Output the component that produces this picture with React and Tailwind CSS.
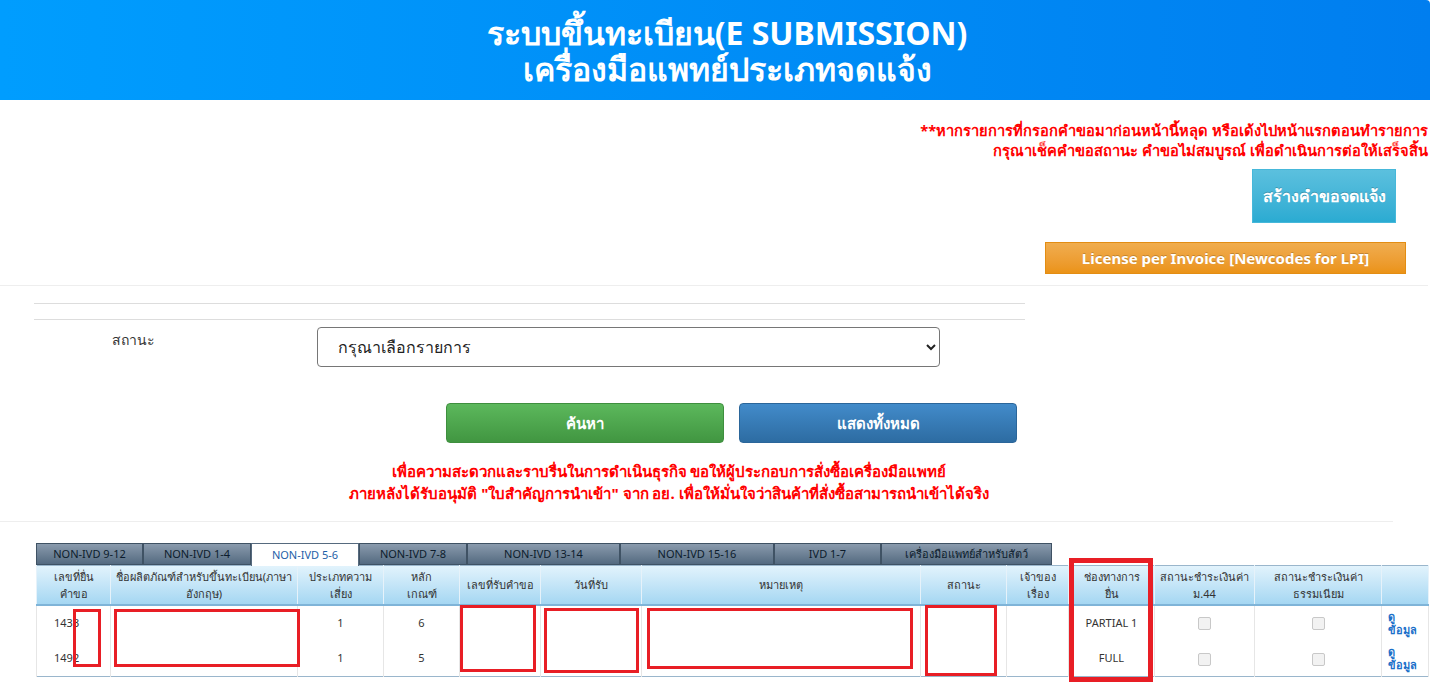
import React from 'react';

const cols = [74, 187, 86, 76, 81, 101, 279, 86, 62, 86, 100, 127, 47];

const heads = [
  ['เลขที่ยื่น', 'คำขอ'],
  ['ชื่อผลิตภัณฑ์สำหรับขึ้นทะเบียน(ภาษา', 'อังกฤษ)'],
  ['ประเภทความ', 'เสี่ยง'],
  ['หลัก', 'เกณฑ์'],
  ['เลขที่รับคำขอ'],
  ['วันที่รับ'],
  ['หมายเหตุ'],
  ['สถานะ'],
  ['เจ้าของ', 'เรื่อง'],
  ['ช่องทางการ', 'ยื่น'],
  ['สถานะชำระเงินค่า', 'ม.44'],
  ['สถานะชำระเงินค่า', 'ธรรมเนียม'],
  [],
];

const tabs = [
  ['NON-IVD 9-12', 107],
  ['NON-IVD 1-4', 108],
  ['NON-IVD 5-6', 108],
  ['NON-IVD 7-8', 108],
  ['NON-IVD 13-14', 153],
  ['NON-IVD 15-16', 154],
  ['IVD 1-7', 107],
  ['เครื่องมือแพทย์สำหรับสัตว์', 171],
];

const rows = [
  { no: '1433', risk: '1', rule: '6', ch: 'PARTIAL 1' },
  { no: '1492', risk: '1', rule: '5', ch: 'FULL' },
];

// red marker boxes drawn over the screenshot
const marks = [
  'left-[73px] top-[609px] w-[28px] h-[58px] border-[3px]',
  'left-[114px] top-[609px] w-[186px] h-[58px] border-[3px]',
  'left-[460px] top-[605px] w-[76px] h-[67px] border-[3px]',
  'left-[544px] top-[608px] w-[95px] h-[65px] border-[3px]',
  'left-[647px] top-[608px] w-[266px] h-[61px] border-[3px]',
  'left-[925px] top-[605px] w-[72px] h-[71px] border-[3px]',
  'left-[1069px] top-[558px] w-[84px] h-[124px] border-[5px]',
];

export default function App() {
  return (
    <div className="relative w-[1436px] h-[682px] overflow-hidden bg-white font-['Tahoma','Noto_Sans','DejaVu_Sans',sans-serif]">
      <div className="w-[1430px] h-[100px] pl-[24px] pt-[2px] rounded-tr-[4px] bg-gradient-to-r from-[#009dfe] to-[#007eef] flex flex-col items-center justify-center text-white font-bold text-[32px] leading-[36px]">
        <div>ระบบขึ้นทะเบียน(E SUBMISSION)</div>
        <div>เครื่องมือแพทย์ประเภทจดแจ้ง</div>
      </div>

      <div className="flex flex-col items-end pt-[20px] pr-[8px] text-[#ff0000] font-bold text-[14.7px] leading-[20px]">
        <div>**หากรายการที่กรอกคำขอมาก่อนหน้านี้หลุด หรือเด้งไปหน้าแรกตอนทำรายการ</div>
        <div>กรุณาเช็คคำขอสถานะ คำขอไม่สมบูรณ์ เพื่อดำเนินการต่อให้เสร็จสิ้น</div>
      </div>
      <div className="flex justify-end pr-[40px] mt-[9px]">
        <button className="w-[144px] h-[54px] bg-gradient-to-b from-[#5bc0de] to-[#2aabd2] border border-[#46b8da] text-white font-bold text-[16px] [text-shadow:0_-1px_0_rgba(0,0,0,0.2)]">
          สร้างคำขอจดแจ้ง
        </button>
      </div>
      <div className="flex justify-end pr-[30px] mt-[19px]">
        <button className="w-[361px] h-[32px] bg-gradient-to-b from-[#f0ad4e] to-[#eb9316] border border-[#e38d13] text-white font-bold text-[15px] [text-shadow:0_-1px_0_rgba(0,0,0,0.2)]">
          License per Invoice [Newcodes for LPI]
        </button>
      </div>
      <div className="w-[1428px] mt-[11px] border-t border-[#eeeeee]" />

      <div className="ml-[34px] w-[991px] mt-[17px] border-t border-[#dddddd]" />
      <div className="ml-[34px] w-[991px] mt-[15px] border-t border-[#dddddd]" />
      <div className="flex mt-[7px]">
        <div className="w-[317px] pl-[112px] pt-[2px] text-[14px] text-[#333333] font-medium">สถานะ</div>
        <select className="w-[623px] h-[40px] border border-[#767676] rounded-[4px] pl-[16px] pr-[6px] text-[16px] text-[#222222] bg-white">
          <option>กรุณาเลือกรายการ</option>
        </select>
      </div>
      <div className="flex gap-[15px] pl-[446px] mt-[36px]">
        <button className="w-[278px] h-[40px] rounded-[4px] bg-gradient-to-b from-[#5cb85c] to-[#419641] border border-[#3e8f3e] text-white font-bold text-[15px]">
          ค้นหา
        </button>
        <button className="w-[278px] h-[40px] rounded-[4px] bg-gradient-to-b from-[#428bca] to-[#2d6ca2] border border-[#2b669a] text-white font-bold text-[15px]">
          แสดงทั้งหมด
        </button>
      </div>
      <div className="ml-[34px] w-[1270px] mt-[17px] text-center text-[#ff0000] font-bold text-[15px] leading-[22px]">
        <div>เพื่อความสะดวกและราบรื่นในการดำเนินธุรกิจ ขอให้ผู้ประกอบการสั่งซื้อเครื่องมือแพทย์</div>
        <div>ภายหลังได้รับอนุมัติ "ใบสำคัญการนำเข้า" จาก อย. เพื่อให้มั่นใจว่าสินค้าที่สั่งซื้อสามารถนำเข้าได้จริง</div>
      </div>
      <div className="w-[1393px] mt-[17px] border-t border-[#eeeeee]" />

      <div className="ml-[36px] mt-[21px]">
        <div className="flex h-[22px]">
          {tabs.map(([t, w], i) => (
            <div
              key={t}
              style={{ width: w }}
              className={
                i === 2
                  ? 'h-[23px] bg-white border border-b-0 border-[#566a7e] text-[#1e5fa8] text-[11px] flex items-center justify-center'
                  : 'h-[22px] bg-gradient-to-b from-[#8a9bad] to-[#546a80] border border-[#3f5264] text-[#0c1c2c] text-[11px] flex items-center justify-center'
              }
            >
              {t}
            </div>
          ))}
        </div>
        <table className="table-fixed border-collapse w-[1392px] border border-[#9ab6cc] text-[11px] text-[#333333]">
          <colgroup>
            {cols.map((w, i) => (
              <col key={i} style={{ width: w }} />
            ))}
          </colgroup>
          <thead>
            <tr className="h-[39px] bg-gradient-to-b from-[#e2f3fc] to-[#a3d6f2]">
              {heads.map((h, i) => (
                <th key={i} className="font-normal leading-[17px] px-[2px] border-l border-r border-[#e6f2fa] border-b-2 border-b-[#7fb4d8] text-[#333333] whitespace-nowrap">
                  {h.map((line, j) => (
                    <div key={j}>{line}</div>
                  ))}
                </th>
              ))}
            </tr>
          </thead>
          <tbody>
            {rows.map((r) => (
              <tr key={r.no} className="h-[36px]">
                <td className="pl-[17px] border-x border-[#e6e6e6]">{r.no}</td>
                <td className="border-x border-[#e6e6e6]"></td>
                <td className="text-center border-x border-[#e6e6e6]">{r.risk}</td>
                <td className="text-center border-x border-[#e6e6e6]">{r.rule}</td>
                <td className="border-x border-[#e6e6e6]"></td>
                <td className="border-x border-[#e6e6e6]"></td>
                <td className="border-x border-[#e6e6e6]"></td>
                <td className="border-x border-[#e6e6e6]"></td>
                <td className="border-x border-[#e6e6e6]"></td>
                <td className="text-center border-x border-[#e6e6e6]">{r.ch}</td>
                <td className="text-center border-x border-[#e6e6e6]">
                  <span className="inline-block w-[13px] h-[13px] rounded-[2px] border border-[#c8c8c8] bg-[#f2f2f2] align-middle" />
                </td>
                <td className="text-center border-x border-[#e6e6e6]">
                  <span className="inline-block w-[13px] h-[13px] rounded-[2px] border border-[#c8c8c8] bg-[#f2f2f2] align-middle" />
                </td>
                <td className="pl-[6px] border-x border-[#e6e6e6] text-[#1a6fc9] font-bold leading-[13px]">
                  ดู<br />ข้อมูล
                </td>
              </tr>
            ))}
          </tbody>
        </table>
      </div>

      {marks.map((m, i) => (
        <div key={i} className={`absolute border-[#e81e25] ${m}`} />
      ))}
    </div>
  );
}
